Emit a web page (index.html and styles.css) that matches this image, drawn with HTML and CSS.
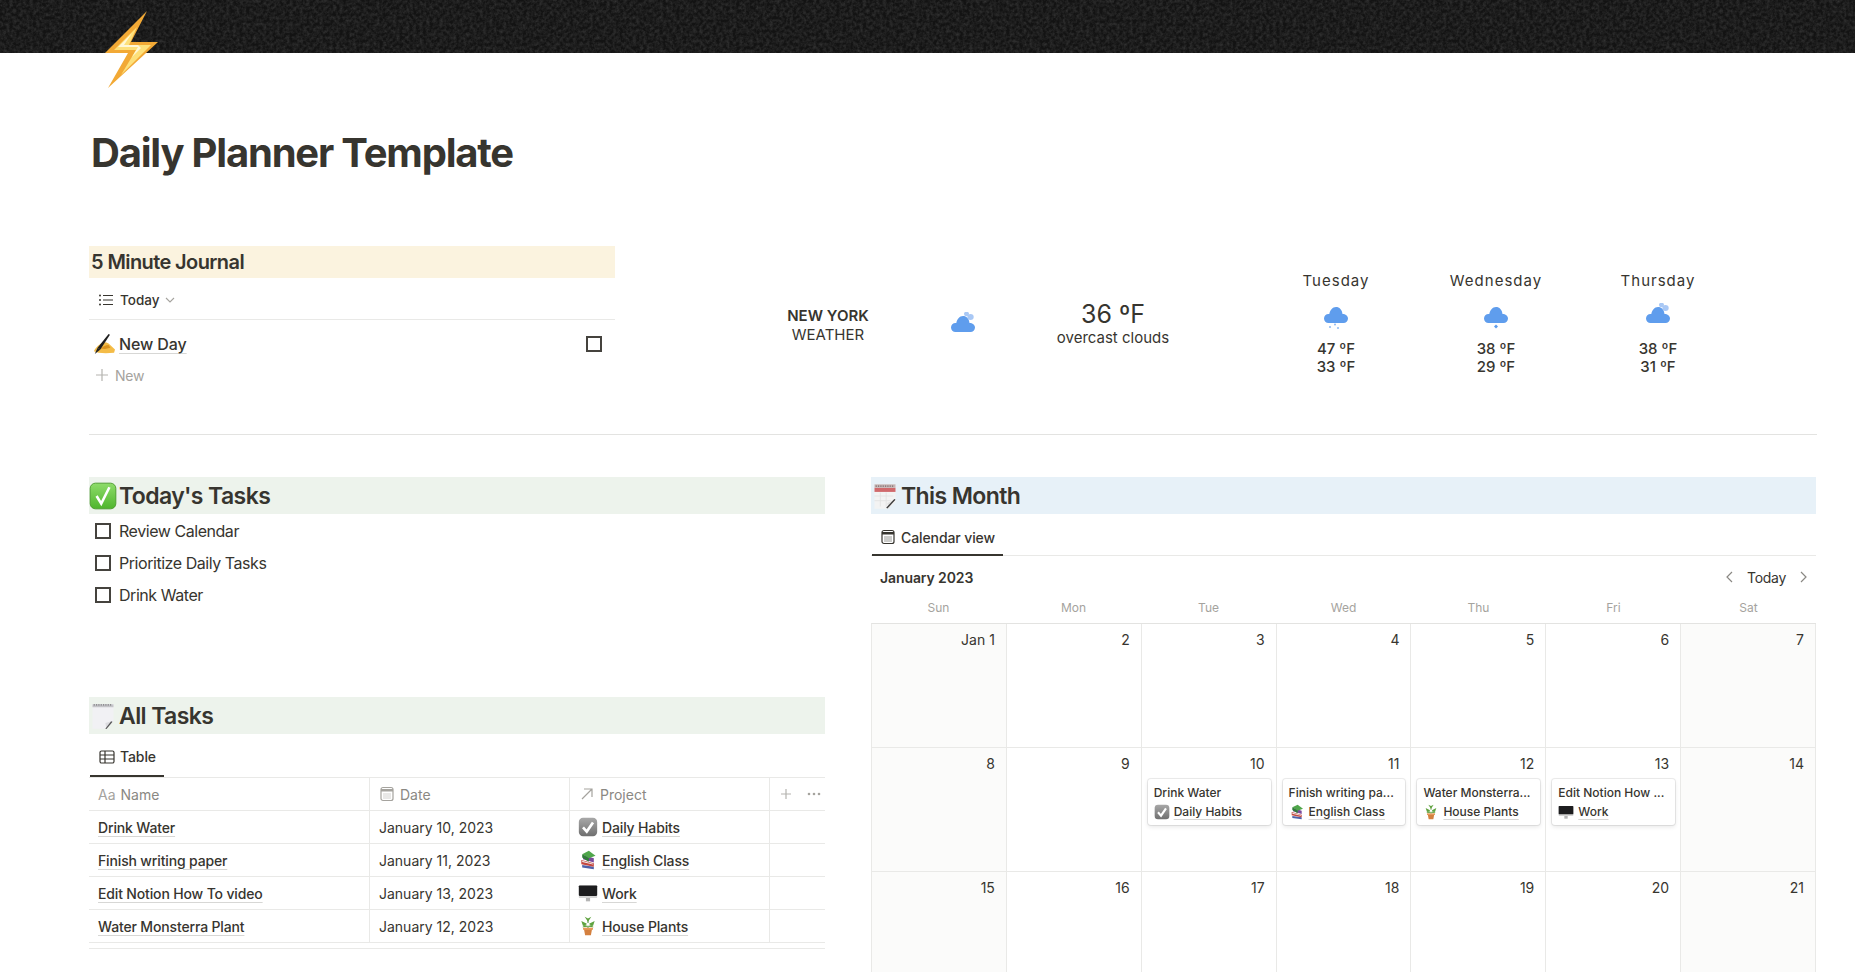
FILE: index.html
```html
<!DOCTYPE html>
<html>
<head>
<meta charset="UTF-8">
<title>Daily Planner Template</title>
<link rel="stylesheet" href="styles.css">
</head>
<body>
<svg class="defs" width="0" height="0">
	<filter id="grain" x="0" y="0" width="100%" height="100%">
		<feTurbulence type="fractalNoise" baseFrequency="0.3" numOctaves="4" seed="4"/>
		<feColorMatrix values="0 0 0 0 1  0 0 0 0 1  0 0 0 0 1  0.22 0 0 0 -0.07"/>
	</filter>
	<linearGradient id="gGreen" x1="0" y1="0" x2="0" y2="1">
		<stop offset="0" stop-color="#8edc6a"/>
		<stop offset="1" stop-color="#4fb52d"/>
	</linearGradient>
	<linearGradient id="gGray" x1="0" y1="0" x2="0" y2="1">
		<stop offset="0" stop-color="#a8a8a8"/>
		<stop offset="1" stop-color="#6f6f6f"/>
	</linearGradient>
	<symbol id="eCheck" viewBox="0 0 24 24">
		<rect x="1" y="1" width="22" height="22" rx="4.500" fill="url(#gGreen)" stroke="#4a9a2c" stroke-width=".8"/>
		<path d="M6.500 12l4 6.500 7-14" fill="none" stroke="#fff" stroke-width="2.200"/>
	</symbol>
	<symbol id="eGray" viewBox="0 0 24 24">
		<rect x="1" y="1" width="22" height="22" rx="5" fill="url(#gGray)"/>
		<path d="M6 12.500l4.500 5L18 6.500" fill="none" stroke="#fff" stroke-width="3.200"/>
	</symbol>
	<symbol id="eNote" viewBox="0 0 24 24">
		<path d="M3 2h18v14l-6 7H3z" fill="#f1f1f4"/>
		<path d="M3 2h18v2.500H3z" fill="#c4c4c8"/>
		<path d="M4 2.500h16" stroke="#777" stroke-width="1" stroke-dasharray="1 1"/>
		<path d="M21 16l-6 7-1-5z" fill="#dcdce0"/>
		<path d="M14 23l5-6.500 1 .6-5 6z" fill="#555"/>
	</symbol>
	<symbol id="eCal" viewBox="0 0 24 24">
		<path d="M3 2h18v15l-6 6H3z" fill="#f3f3f3"/>
		<path d="M3 5h18v3.500H3z" fill="#d0696c"/>
		<path d="M3 2h18v3H3z" fill="#c4b4b4"/>
		<path d="M4 3.500h16" stroke="#7a6a6a" stroke-width="1.200" stroke-dasharray="1 1"/>
		<path d="M3 12h16M3 16h14M8 9v12M13 9v12" stroke="#e2e2e2" stroke-width=".7"/>
		<path d="M21 15l-6 8-1-5z" fill="#e0e0e0"/>
		<path d="M13 22l7-7.500 1 .8-7 7.500z" fill="#3a3a3a"/>
	</symbol>
	<symbol id="eHand" viewBox="0 0 24 24">
		<path d="M1 20c1-3 5-7 8-8.500l5-1.500 3 1.500 7 6.500-1 3.500-9 .5-8-.5z" fill="#f4bc47"/>
		<path d="M8 17c3-2.500 6-4 9-4l2 3-6 1.500z" fill="#d9921f"/>
		<path d="M5 16L17 1l1.500 1L8 18z" fill="#1f1f1f"/>
		<path d="M2 23l3-7 3 2z" fill="#222"/>
	</symbol>
	<symbol id="eBooks" viewBox="0 0 24 24">
		<path d="M5 18l14 2v3L5 21z" fill="#4f60a8"/>
		<path d="M4 12l15 4v4L4 17z" fill="#c5483f"/>
		<path d="M5 13l13 3.500v1L5 14.500z" fill="#eee"/>
		<path d="M6 6l13 4v5L6 11z" fill="#7a4a9c"/>
		<path d="M5 5l8-4 8 6-8 3z" fill="#4fa64b"/>
		<path d="M5 5l8 5v4L5 9z" fill="#2f7d38"/>
	</symbol>
	<symbol id="eMac" viewBox="0 0 24 24">
		<rect x="1" y="3" width="22" height="15" rx="1" fill="#d5d5d5"/>
		<rect x="1" y="3" width="22" height="12.500" rx="1" fill="#1d1d1f"/>
		<rect x="9.500" y="18" width="5" height="4" fill="#b5b5b5"/>
	</symbol>
	<symbol id="ePlant" viewBox="0 0 24 24">
		<path d="M7 15h10l-1.500 8h-7z" fill="#d4803f"/>
		<rect x="6" y="14" width="12" height="2.500" fill="#e59a5a"/>
		<path d="M12 14V4" stroke="#4d8a34" stroke-width="1.300"/>
		<path d="M12 10L4 6l2 6zM12 10l8-4-2 6zM12 7L8 1l4 2 4-2zM12 13l-7 .5 4-3zM12 13l7 .5-4-3z" fill="#5fa23f"/>
		<circle cx="12" cy="10" r="1.800" fill="#fff"/>
	</symbol>
	<symbol id="cloud" viewBox="0 0 24 32">
		<path d="M4.500 20C2 20 0 18 0 15.500S2 11 4.500 11c.3 0 .6 0 .8.1C5.800 7.500 8.500 4 12 4s6 2.700 6.500 7c3 0 5.500 2 5.500 4.500S22 20 19.500 20z" fill="#5f9ded"/>
	</symbol>
	<symbol id="cloudSun" viewBox="0 0 24 32">
		<ellipse cx="15.500" cy="2" rx="2.500" ry="2.300" fill="#a9c8f5"/>
		<ellipse cx="19.500" cy="5" rx="3.200" ry="3" fill="#a9c8f5"/>
		<path d="M4.500 20C2 20 0 18 0 15.500S2 11 4.500 11c.3 0 .6 0 .8.1C5.800 7.500 8.500 4 12 4s6 2.700 6.500 7c3 0 5.500 2 5.500 4.500S22 20 19.500 20z" fill="#5f9ded"/>
	</symbol>
	<symbol id="cal" viewBox="0 0 16 16">
		<rect x="2" y="1.500" width="12" height="13" rx="2" fill="none" stroke="currentColor" stroke-width="1.200"/>
		<path d="M2 3h12v2.500H2z" fill="currentColor"/>
		<path d="M4.500 8h7M4.500 10h7M4.500 12h7" stroke="currentColor" stroke-width="1" stroke-dasharray="1 1"/>
	</symbol>
</svg>

<header class="cover">
	<svg class="coverNoise" width="100%" height="53"><rect width="100%" height="100%" filter="url(#grain)"/></svg>
</header>
<svg class="bolt" viewBox="80 5 90 90" width="90" height="90">
	<path d="M147 11L105 53h23l-20 35 50-46h-27z" fill="#f2a935"/>
	<path d="M137 27l-23 23h22l-15 25 30-30h-22z" fill="#fde07a"/>
	<path d="M132 33l-14 14h20l-6 10 9-9-3-3h-14z" fill="#fff8d6"/>
</svg>

<div class="page">
	<h1 class="title">Daily Planner Template</h1>

	<section class="top">
		<div class="journal">
			<h3 class="heading3 bgYellow">5 Minute Journal</h3>
			<div class="tabs">
				<div class="viewPick">
					<svg class="ico" viewBox="0 0 16 16" width="16" height="16"><path d="M5 3.500h10M5 8h10M5 12.500h10" stroke="#37352f" stroke-width="1.100"/><circle cx="2" cy="3.500" r="1" fill="#37352f"/><circle cx="2" cy="8" r="1" fill="#37352f"/><circle cx="2" cy="12.500" r="1" fill="#37352f"/></svg>
					<span>Today</span>
					<svg viewBox="0 0 10 6" width="10" height="6"><path d="M1 1l4 4 4-4" fill="none" stroke="#a5a39e" stroke-width="1.100"/></svg>
				</div>
			</div>
			<div class="listRow">
				<svg width="22" height="22"><use href="#eHand"/></svg>
				<span class="link">New Day</span>
				<span class="box boxEnd"></span>
			</div>
			<div class="addRow">
				<svg viewBox="0 0 14 14" width="14" height="14"><path d="M7 1v12M1 7h12" stroke="#b5b4b0" stroke-width="1.200"/></svg>
				<span>New</span>
			</div>
		</div>
		<div class="weather">
			<div class="wCity"><b>NEW YORK</b><span>WEATHER</span></div>
			<div class="wNow"><svg width="24" height="32"><use href="#cloudSun"/></svg></div>
			<div class="wTemp"><div class="wBig">36 ºF</div><div>overcast clouds</div></div>
			<div class="wDay wFirst">
				<div class="wName">Tuesday</div>
				<svg viewBox="0 0 24 32" width="24" height="32"><use href="#cloud" width="24" height="32"/><circle cx="6" cy="24" r="1" fill="#8db8f2"/><circle cx="11" cy="21.500" r="1" fill="#8db8f2"/><circle cx="14" cy="25" r="1" fill="#8db8f2"/></svg>
				<div class="wHi">47 ºF</div><div>33 ºF</div>
			</div>
			<div class="wDay">
				<div class="wName">Wednesday</div>
				<svg viewBox="0 0 24 32" width="24" height="32"><use href="#cloud" width="24" height="32"/><path d="M11 21.500l2 2-2 2-2-2z" fill="#5f9ded" transform="translate(1 0)"/></svg>
				<div class="wHi">38 ºF</div><div>29 ºF</div>
			</div>
			<div class="wDay wLast">
				<div class="wName">Thursday</div>
				<svg width="24" height="32"><use href="#cloudSun"/></svg>
				<div class="wHi">38 ºF</div><div>31 ºF</div>
			</div>
		</div>
	</section>

	<hr class="divider">

	<section class="cols">
		<div class="colLeft">
			<h2 class="heading2 bgGreen"><svg width="28" height="28"><use href="#eCheck"/></svg><span>Today's Tasks</span></h2>
			<div class="todo"><span class="box"></span>Review Calendar</div>
			<div class="todo"><span class="box"></span>Prioritize Daily Tasks</div>
			<div class="todo"><span class="box"></span>Drink Water</div>

			<h2 class="heading2 bgGreen allTasks"><svg width="28" height="28"><use href="#eNote"/></svg><span>All Tasks</span></h2>
			<div class="viewTabs">
				<div class="tab">
					<svg viewBox="0 0 16 16" width="16" height="16"><rect x="1" y="2" width="14" height="12" rx="1.500" fill="none" stroke="#37352f" stroke-width="1.200"/><path d="M1 6h14M1 10h14M6 2v12" stroke="#37352f" stroke-width="1.200"/></svg>
					Table
				</div>
			</div>
			<div class="tRow tHead">
				<div class="tCell"><span class="aa">Aa</span>Name</div>
				<div class="tCell"><svg width="16" height="16" class="grayIco"><use href="#cal"/></svg>Date</div>
				<div class="tCell"><svg viewBox="0 0 16 16" width="16" height="16"><path d="M3 13L13 3M5 3h8v8" fill="none" stroke="#a5a39e" stroke-width="1.200"/></svg>Project</div>
				<div class="tCell tEnd">
					<svg viewBox="0 0 14 14" width="14" height="14"><path d="M7 2v10M2 7h10" stroke="#b5b4b0" stroke-width="1.200"/></svg>
					<svg viewBox="0 0 14 4" width="14" height="4"><circle cx="2" cy="2" r="1.300" fill="#a5a39e"/><circle cx="7" cy="2" r="1.300" fill="#a5a39e"/><circle cx="12" cy="2" r="1.300" fill="#a5a39e"/></svg>
				</div>
			</div>
			<div class="tRow">
				<div class="tCell"><span class="link">Drink Water</span></div>
				<div class="tCell">January 10, 2023</div>
				<div class="tCell tProj"><svg width="20" height="20"><use href="#eGray"/></svg><span class="link">Daily Habits</span></div>
				<div class="tCell"></div>
			</div>
			<div class="tRow">
				<div class="tCell"><span class="link">Finish writing paper</span></div>
				<div class="tCell">January 11, 2023</div>
				<div class="tCell tProj"><svg width="20" height="20"><use href="#eBooks"/></svg><span class="link">English Class</span></div>
				<div class="tCell"></div>
			</div>
			<div class="tRow">
				<div class="tCell"><span class="link">Edit Notion How To video</span></div>
				<div class="tCell">January 13, 2023</div>
				<div class="tCell tProj"><svg width="20" height="20"><use href="#eMac"/></svg><span class="link">Work</span></div>
				<div class="tCell"></div>
			</div>
			<div class="tRow">
				<div class="tCell"><span class="link">Water Monsterra Plant</span></div>
				<div class="tCell">January 12, 2023</div>
				<div class="tCell tProj"><svg width="20" height="20"><use href="#ePlant"/></svg><span class="link">House Plants</span></div>
				<div class="tCell"></div>
			</div>
			<div class="tFoot"></div>
		</div>

		<div class="colRight">
			<h2 class="heading2 bgBlue"><svg width="28" height="28"><use href="#eCal"/></svg><span>This Month</span></h2>
			<div class="viewTabs">
				<div class="tab tabCal"><svg width="16" height="16"><use href="#cal"/></svg>Calendar view</div>
			</div>
			<div class="calBar">
				<div class="calMonth">January 2023</div>
				<div class="calNav">
					<svg viewBox="0 0 8 12" width="8" height="12"><path d="M7 1L2 6l5 5" fill="none" stroke="#8a8883" stroke-width="1.200"/></svg>
					<span>Today</span>
					<svg viewBox="0 0 8 12" width="8" height="12"><path d="M1 1l5 5-5 5" fill="none" stroke="#8a8883" stroke-width="1.200"/></svg>
				</div>
			</div>
			<div class="calDays">
				<div>Sun</div><div>Mon</div><div>Tue</div><div>Wed</div><div>Thu</div><div>Fri</div><div>Sat</div>
			</div>
			<div class="calGrid">
				<div class="day weekend">Jan 1</div>
				<div class="day">2</div>
				<div class="day">3</div>
				<div class="day">4</div>
				<div class="day">5</div>
				<div class="day">6</div>
				<div class="day weekend">7</div>

				<div class="day weekend">8</div>
				<div class="day">9</div>
				<div class="day">10
					<div class="card"><div class="cardName">Drink Water</div><div class="cardProj"><svg width="16" height="16"><use href="#eGray"/></svg><span class="link">Daily Habits</span></div></div>
				</div>
				<div class="day">11
					<div class="card"><div class="cardName">Finish writing pa...</div><div class="cardProj"><svg width="16" height="16"><use href="#eBooks"/></svg><span class="link">English Class</span></div></div>
				</div>
				<div class="day">12
					<div class="card"><div class="cardName">Water Monsterra...</div><div class="cardProj"><svg width="16" height="16"><use href="#ePlant"/></svg><span class="link">House Plants</span></div></div>
				</div>
				<div class="day">13
					<div class="card"><div class="cardName">Edit Notion How ...</div><div class="cardProj"><svg width="16" height="16"><use href="#eMac"/></svg><span class="link">Work</span></div></div>
				</div>
				<div class="day weekend">14</div>

				<div class="day weekend">15</div>
				<div class="day">16</div>
				<div class="day">17</div>
				<div class="day">18</div>
				<div class="day">19</div>
				<div class="day">20</div>
				<div class="day weekend">21</div>
			</div>
		</div>
	</section>
</div>
</body>
</html>
```
FILE: styles.css
```css
html, body {
	margin: 0;
	height: 972px;
	overflow: hidden;
}
body {
	position: relative;
	background: #fff;
	color: #37352f;
	font-family: Inter, "Liberation Sans", sans-serif;
	font-size: 14px;
}
.defs {
	position: absolute;
}
.cover {
	height: 53px;
	background: #131313;
}
.coverNoise {
	display: block;
}
.bolt {
	position: absolute;
	left: 80px;
	top: 5px;
}
.page {
	padding: 0 38px 0 89px;
}
.title {
	margin: 76px 0 69px 2px;
	font-size: 40px;
	line-height: 48px;
	font-weight: 700;
	letter-spacing: -1.2px;
}

/* top row */
.top {
	display: flex;
	height: 188px;
}
.journal {
	flex: none;
	width: 526px;
}
.heading3 {
	margin: 0;
	padding-left: 2px;
	height: 32px;
	font-size: 20px;
	line-height: 32px;
	font-weight: 600;
	letter-spacing: -0.6px;
}
.bgYellow { background: #fbf3df; }
.bgGreen { background: #edf3ec; }
.bgBlue { background: #e7f1f8; }
.tabs {
	height: 41px;
	border-bottom: 1px solid #e9e9e7;
	display: flex;
	align-items: center;
}
.viewPick {
	display: flex;
	align-items: center;
	gap: 6px;
	margin: 2px 0 0 9px;
	font-weight: 500;
	font-size: 13.500px;
}
.listRow {
	margin-top: 8px;
	height: 32px;
	padding: 0 13px 0 4px;
	display: flex;
	align-items: center;
	gap: 4px;
	font-size: 16px;
	font-weight: 500;
	letter-spacing: -0.1px;
}
.link {
	text-decoration: underline 1px rgba(55,53,47,.2);
	text-underline-offset: 3px;
}
.box {
	flex: none;
	box-sizing: border-box;
	width: 16px;
	height: 16px;
	border: 2px solid #45433e;
}
.boxEnd {
	margin-left: auto;
}
.addRow {
	height: 30px;
	padding-left: 6px;
	display: flex;
	align-items: center;
	gap: 6px;
	color: #a5a39e;
	letter-spacing: -0.2px;
}

/* weather */
.weather {
	margin-left: 133px;
	display: flex;
	text-align: center;
	font-size: 15px;
}
.wCity {
	width: 160px;
	padding-top: 60px;
	display: flex;
	flex-direction: column;
	line-height: 19px;
}
.wCity b {
	font-weight: 600;
}
.wNow {
	width: 110px;
	padding-top: 66px;
}
.wTemp {
	width: 190px;
	padding-top: 55px;
	line-height: 19px;
}
.wBig {
	font-size: 25px;
	line-height: 27px;
}
.wDay {
	width: 160px;
	padding-top: 25px;
	line-height: 18px;
	font-weight: 500;
}
.wFirst {
	margin-left: 48px;
}
.wLast {
	margin-left: 2px;
}
.wName {
	font-weight: 400;
	letter-spacing: 1px;
	line-height: 20px;
	margin-bottom: 12px;
}
.wDay svg {
	display: block;
	margin: 0 auto;
}
.wHi {
	margin-top: 5px;
}
.divider {
	margin: 0;
	border: 0;
	border-top: 1px solid #e3e3e1;
}

/* columns */
.cols {
	display: grid;
	grid-template-columns: 736px 945px;
	gap: 46px;
	margin-top: 42px;
}
.heading2 {
	margin: 0;
	height: 37px;
	display: flex;
	align-items: center;
	gap: 2px;
	font-size: 23px;
	line-height: 37px;
	font-weight: 600;
	letter-spacing: -0.6px;
}
.heading2 span {
	padding-top: 1px;
}
.heading2 svg {
	flex: none;
}
.todo {
	height: 32px;
	padding-left: 6px;
	display: flex;
	align-items: center;
	gap: 8px;
	font-size: 16px;
	letter-spacing: -0.45px;
}
.heading2 + .todo {
	margin-top: 1px;
}
.allTasks {
	margin-top: 86px;
}
.viewTabs {
	height: 44px;
	box-sizing: border-box;
	border-bottom: 1px solid #e9e9e7;
	display: flex;
	align-items: flex-end;
}
.tab {
	display: flex;
	align-items: center;
	gap: 5px;
	height: 36px;
	box-sizing: border-box;
	margin-left: 1px;
	width: 74px;
	padding: 0 0 3px 9px;
	border-bottom: 2px solid #37352f;
	font-size: 14px;
	font-weight: 500;
	letter-spacing: -0.1px;
}
.colRight .viewTabs {
	height: 42px;
}
.tabCal {
	width: 131px;
	gap: 5px;
	margin-bottom: -1px;
	padding: 0 0 0 8px;
}

/* table */
.tRow {
	display: grid;
	grid-template-columns: 281px 200px 200px 1fr;
	height: 33px;
	box-sizing: border-box;
	border-bottom: 1px solid #e9e9e7;
}
.tCell {
	display: flex;
	align-items: center;
	padding: 0 0 0 9px;
	border-right: 1px solid #e9e9e7;
}
.tRow .tCell:last-child {
	border-right: 0;
}
.tRow .tCell:first-child,
.tRow .tProj {
	font-weight: 500;
	letter-spacing: -0.15px;
}
.tRow .tProj {
	padding-left: 8px;
	gap: 4px;
}
.tHead .tCell,
.tHead .tCell:first-child {
	color: #8a8883;
	font-weight: 400;
	letter-spacing: 0;
	gap: 5px;
}
.aa,
.grayIco {
	color: #a5a39e;
}
.tHead .tEnd {
	gap: 14px;
	padding-left: 9px;
}
.tFoot {
	height: 5px;
	border-bottom: 1px solid #e9e9e7;
}

/* calendar */
.calBar {
	height: 30px;
	margin-top: 6px;
	padding: 0 8px 0 9px;
	display: flex;
	align-items: center;
	justify-content: space-between;
}
.calMonth {
	font-weight: 600;
	letter-spacing: -0.1px;
}
.calNav {
	display: flex;
	align-items: center;
	gap: 14px;
	letter-spacing: -0.3px;
}
.calDays {
	display: grid;
	grid-template-columns: repeat(7, 1fr);
	height: 31px;
	align-items: center;
	text-align: center;
	font-size: 12px;
	color: #a5a39e;
}
.calGrid {
	display: grid;
	grid-template-columns: repeat(7, 1fr);
	border-top: 1px solid #e3e3e1;
	border-left: 1px solid #e9e9e7;
}
.day {
	box-sizing: border-box;
	height: 124px;
	padding: 7px 11px 0 6px;
	border-right: 1px solid #e9e9e7;
	border-bottom: 1px solid #e9e9e7;
	text-align: right;
	line-height: 17px;
	min-width: 0;
}
.weekend {
	background: #fbfbfa;
}
.card {
	box-sizing: border-box;
	height: 46px;
	margin: 7px -6px 0 0;
	padding: 6px 6px 4px;
	background: #fff;
	border-radius: 3px;
	box-shadow: 0 0 0 1px rgba(15,15,15,.08), 0 2px 4px rgba(15,15,15,.1);
	text-align: left;
	font-size: 12px;
	font-weight: 500;
	line-height: 16px;
	white-space: nowrap;
}
.cardProj {
	margin-top: 3px;
	display: flex;
	align-items: center;
	gap: 4px;
}
```
